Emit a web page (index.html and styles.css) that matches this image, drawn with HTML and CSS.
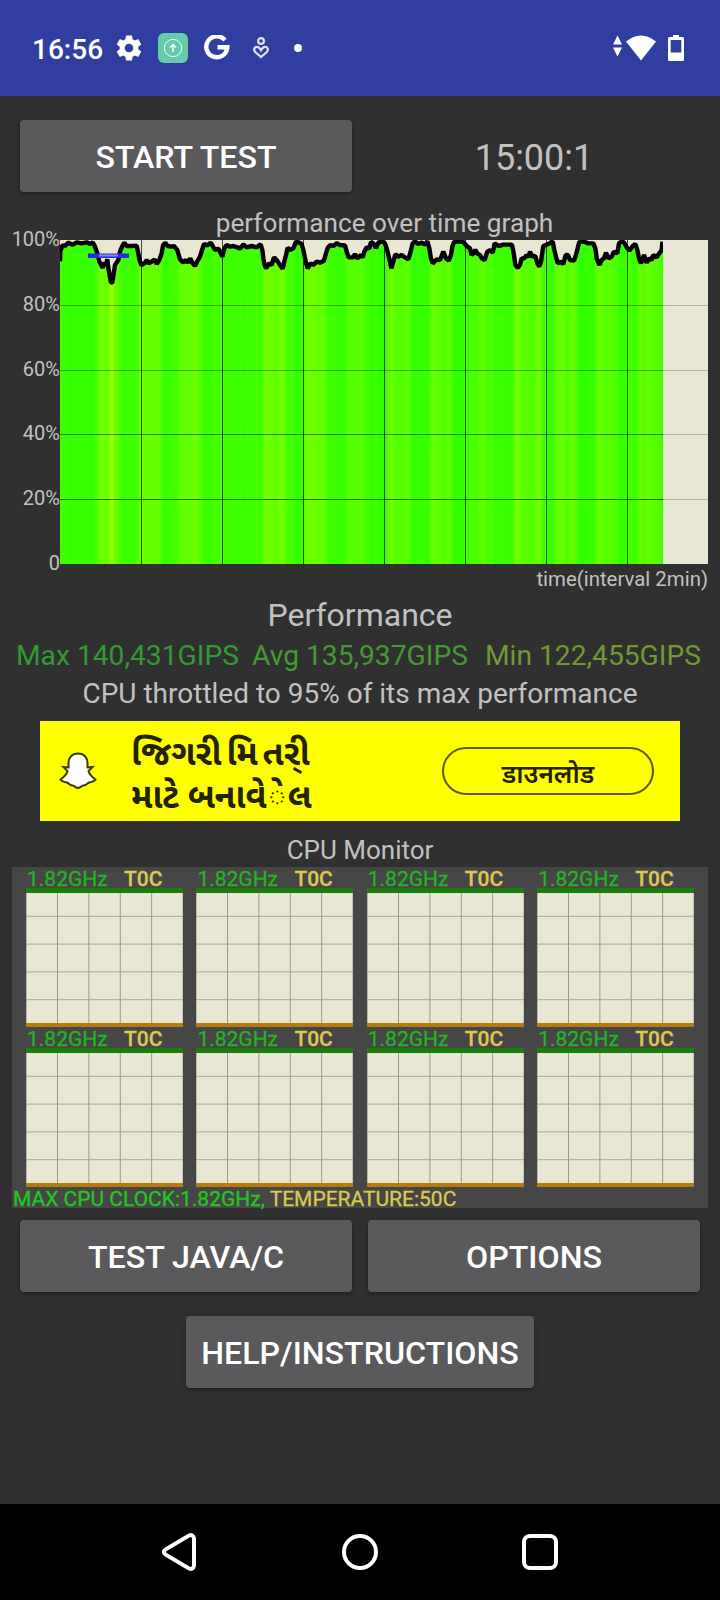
FILE: index.html
```html
<!DOCTYPE html>
<html lang="en">
<head>
    <meta charset="UTF-8">
    <title>CPU Throttling Test</title>
    <link rel="stylesheet" href="styles.css">
</head>
<body>
    <div class="status">
        <span class="clock">16:56</span>
        <svg class="gear" width="26" height="26" viewBox="2 2 20 20"><path fill="#fff" d="M19.14 12.94c.04-.3.06-.61.06-.94 0-.32-.02-.64-.07-.94l2.03-1.58c.18-.14.23-.41.12-.61l-1.92-3.32c-.12-.22-.37-.29-.59-.22l-2.39.96c-.5-.38-1.03-.7-1.62-.94l-.36-2.54c-.04-.24-.24-.41-.48-.41h-3.84c-.24 0-.43.17-.47.41l-.36 2.54c-.59.24-1.13.57-1.62.94l-2.39-.96c-.22-.08-.47 0-.59.22L2.74 8.87c-.12.21-.08.47.12.61l2.03 1.58c-.05.3-.09.63-.09.94s.02.64.07.94l-2.03 1.58c-.18.14-.23.41-.12.61l1.92 3.32c.12.22.37.29.59.22l2.39-.96c.5.38 1.03.7 1.62.94l.36 2.54c.05.24.24.41.48.41h3.84c.24 0 .44-.17.47-.41l.36-2.54c.59-.24 1.13-.56 1.62-.94l2.39.96c.22.08.47 0 .59-.22l1.92-3.32c.12-.22.07-.47-.12-.61l-2.01-1.58zM12 15.3c-1.8 0-3.3-1.5-3.3-3.3s1.5-3.3 3.3-3.3 3.3 1.5 3.3 3.3-1.5 3.3-3.3 3.3z"/></svg>
        <svg class="upload" width="30" height="30" viewBox="0 0 30 30"><rect width="30" height="30" rx="6" fill="#66cbaa"/><circle cx="15" cy="15" r="8.7" fill="none" stroke="#fff"/><path d="M15 19v-7M12 14.5l3-3 3 3" fill="none" stroke="#fff" stroke-width="1.5"/></svg>
        <svg class="google" width="26" height="26" viewBox="0 0 26 26"><path d="M21 5.2A10.5 10.5 0 1 0 23.3 12.3H13.5" fill="none" stroke="#fff" stroke-width="4.4"/></svg>
        <svg class="heart" width="16" height="22" viewBox="0 0 16 22"><circle cx="8" cy="4" r="2.9" fill="none" stroke="#dfe2f3" stroke-width="2.200"/><path d="M8 20L2.2 15C0 12.4 1.6 9.8 4 9.8c1.8 0 3 1.6 4 3.400 1-1.800 2.200-3.400 4-3.400 2.400 0 4 2.600 1.800 5.200z" fill="none" stroke="#dfe2f3" stroke-width="2.200"/></svg>
        <span class="dot"></span>
        <svg class="signal" width="44" height="26" viewBox="0 0 44 26"><path fill="#fff" d="M4.500 .5L9 9.500H0zM0 12.500h9l-4.500 9zM13 6.500Q28-5.500 43 6.500L28 25.500z"/></svg>
        <svg class="battery" width="16" height="26" viewBox="0 0 16 26"><path fill="#fff" fill-rule="evenodd" d="M5 0h6v2h3.500q1.500 0 1.500 1.500v21q0 1.500-1.500 1.500h-13Q0 26 0 24.500v-21Q0 2 1.500 2H5zM2.700 5v12.500h10.600V5z"/></svg>
    </div>

    <div class="main">
        <div class="row top">
            <button class="btn">START TEST</button>
            <div class="timer">15:00:1</div>
        </div>

        <div class="title"><span>performance over time graph</span></div>
        <div class="graph">
            <div class="scale">
                <span>100%</span>
                <span>80%</span>
                <span>60%</span>
                <span>40%</span>
                <span>20%</span>
                <span>0</span>
            </div>
            <canvas id="graph" width="648" height="324"></canvas>
        </div>
        <div class="interval">time(interval 2min)</div>

        <div class="heading">Performance</div>
        <div class="results">
            <span class="max">Max 140,431GIPS</span>
            <span class="avg">Avg 135,937GIPS</span>
            <span class="min">Min 122,455GIPS</span>
        </div>
        <div class="throttled">CPU throttled to 95% of its max performance</div>

        <div class="ad">
            <svg class="ghost" width="38" height="38" viewBox="0 0 38 38"><path d="M19 1.500c-6 0-9.500 4-9.500 9.500v4.500l-5-.5 4 4c-1 4-3.500 6-7 8.500 1 2 4 2.500 6.500 3 2 1 2.500 3 5.500 3 2 0 3 2.500 5.500 2.500s3.500-2.500 5.500-2.500c3 0 3.500-2 5.500-3 2.500-.5 5.500-1 6.500-3-3.500-2.500-6-4.500-7-8.500l4-4-5 .5V11c0-5.500-3.500-9.500-9.500-9.500z" fill="#fff" stroke="#3c3c00" stroke-width="2"/></svg>
            <div class="slogan" lang="gu">
                <div class="line">જિગરી મિ ત<span class="virama">રી</span></div>
                <div>માટે બનાવે<span class="mark">◌ે</span>લ</div>
            </div>
            <div class="download" lang="hi">डाउनलोड</div>
        </div>

        <div class="monitor-title">CPU Monitor</div>
        <div class="monitor">
            <div class="cores" id="cores">
                <div class="core"><div class="info"><span>1.82GHz</span><b>T0C</b></div><div class="plot"></div></div>
                <div class="core"><div class="info"><span>1.82GHz</span><b>T0C</b></div><div class="plot"></div></div>
                <div class="core"><div class="info"><span>1.82GHz</span><b>T0C</b></div><div class="plot"></div></div>
                <div class="core"><div class="info"><span>1.82GHz</span><b>T0C</b></div><div class="plot"></div></div>
                <div class="core"><div class="info"><span>1.82GHz</span><b>T0C</b></div><div class="plot"></div></div>
                <div class="core"><div class="info"><span>1.82GHz</span><b>T0C</b></div><div class="plot"></div></div>
                <div class="core"><div class="info"><span>1.82GHz</span><b>T0C</b></div><div class="plot"></div></div>
                <div class="core"><div class="info"><span>1.82GHz</span><b>T0C</b></div><div class="plot"></div></div>
            </div>
            <div class="summary"><span>MAX CPU CLOCK:1.82GHz,</span> <b>TEMPERATURE:50C</b></div>
        </div>

        <div class="row">
            <button class="btn">TEST JAVA/C</button>
            <button class="btn">OPTIONS</button>
        </div>
        <div class="row help">
            <button class="btn">HELP/INSTRUCTIONS</button>
        </div>
    </div>

    <div class="nav">
        <svg width="40" height="40" viewBox="2 0 40 40"><path d="M7.700 17.400Q4 20 7.700 22.600L31 36.500Q35 38 36 33.500V6.500Q35 2 31 3.500z"/></svg>
        <svg width="40" height="40" viewBox="0 0 40 40"><circle cx="20" cy="20" r="16"/></svg>
        <svg width="40" height="40" viewBox="0 0 40 40"><rect x="4" y="4" width="32" height="32" rx="6"/></svg>
    </div>

<script src="graph.js"></script>
</body>
</html>
```

FILE: graph.js
```js
// samples of the run, three per pixel; x/y is the origin of each part
var parts = [
    {x: -180, y: -420, data: [[180,484],[181,455],[187,436],[195,438],[205,428],[218,434],[230,427],[245,430],[260,427],[270,432],[278,427],[285,440],[292,460],[298,485],[308,503],[314,488],[318,495],[322,478],[326,510],[333,548],[337,548],[345,495],[355,480],[360,455],[366,440],[373,428],[380,438],[395,438],[410,437],[414,455],[418,478],[424,496],[435,488],[440,480],[446,490],[458,483],[464,478],[470,492],[478,480],[485,460],[489,436],[496,428],[503,438],[515,440],[522,438],[532,450],[540,478],[550,488],[557,480],[564,488],[571,475],[577,488],[585,498],[592,484],[600,470],[606,450],[612,432],[622,436],[632,428],[638,438],[645,450],[655,446],[661,457],[667,470],[673,445],[680,435],[690,440],[700,438],[712,442]]},
    {x: 540, y: -120, data: [[0,146],[10,133],[20,142],[35,138],[50,142],[62,133],[67,150],[70,175],[74,195],[78,205],[88,190],[95,195],[102,172],[110,180],[118,192],[128,206],[134,180],[138,165],[143,143],[150,150],[160,145],[168,125],[175,127],[185,132],[190,150],[194,170],[198,188],[203,205],[212,190],[220,195],[230,185],[240,188],[252,182],[258,160],[264,142],[272,135],[280,138],[290,130],[300,135],[315,136],[320,155],[326,172],[340,172],[345,162],[352,175],[362,165],[368,172],[373,155],[380,142],[388,145],[393,126],[400,130],[408,144],[415,128],[425,124],[434,128],[440,145],[445,165],[450,185],[454,205],[460,185],[466,163],[475,170],[485,165],[495,172],[505,178],[512,155],[518,130],[525,124],[535,132],[545,128],[555,134],[562,124],[568,145],[573,175],[578,190],[590,178],[600,180],[610,155],[618,175],[626,182],[633,165],[637,140],[642,126],[655,124],[670,126],[680,138],[690,145],[695,165],[700,160],[706,150],[712,160]]},
    {x: 1260, y: -120, data: [[0,165],[5,175],[14,180],[22,155],[30,150],[38,158],[44,130],[55,138],[70,134],[85,134],[96,134],[102,165],[106,195],[113,204],[120,195],[125,175],[132,175],[140,165],[145,172],[150,155],[158,170],[166,168],[172,190],[178,200],[183,185],[188,150],[190,138],[205,132],[218,124],[223,150],[228,170],[233,190],[242,185],[250,192],[257,165],[264,165],[270,180],[282,182],[288,165],[294,140],[298,126],[310,124],[325,130],[340,130],[346,145],[350,175],[358,195],[365,180],[372,175],[378,158],[385,175],[395,170],[402,155],[412,160],[417,130],[425,124],[433,128],[440,142],[448,152],[458,138],[466,132],[472,150],[477,175],[483,190],[492,165],[500,188],[507,175],[515,180],[520,165],[530,172],[538,160],[545,150],[547,125]]}
];

var points = [];
for (var i = 0; i < parts.length; i++) {
    for (var j = 0; j < parts[i].data.length; j++) {
        var p = parts[i].data[j];
        points.push([(p[0] + parts[i].x) / 3, (p[1] + parts[i].y) / 3]);
    }
}

var canvas = document.getElementById("graph");
var ctx = canvas.getContext("2d");
ctx.fillStyle = "#e7e7d3";
ctx.fillRect(0, 0, 648, 324);

// height of the line at a column
function valueAt(x) {
    for (var i = 1; i < points.length; i++) {
        if (points[i][0] >= x) {
            var a = points[i - 1], b = points[i];
            return a[1] + (b[1] - a[1]) * (x - a[0]) / (b[0] - a[0]);
        }
    }
    return points[points.length - 1][1];
}

// the lower the value, the more yellow the column
for (var x = 0; x < 603; x++) {
    var y = valueAt(x + 0.5);
    var red = Math.round(Math.min(165, 46 + y * 2.5));
    ctx.fillStyle = "rgb(" + red + ",255,0)";
    ctx.fillRect(x, y, 1, 324 - y);
}

// grid
for (var k = 1; k < 8; k++) {
    ctx.fillStyle = "rgba(0,0,0,0.7)";
    ctx.fillRect(k * 81, 0, 1, 324);
}
var alphas = [0.3, 0.3, 0.45, 0.6];
for (k = 1; k < 5; k++) {
    ctx.fillStyle = "rgba(0,0,0," + alphas[k - 1] + ")";
    ctx.fillRect(0, Math.round(k * 64.8), 603, 1);
    ctx.fillStyle = "rgba(0,0,0,0.22)";
    ctx.fillRect(603, Math.round(k * 64.8), 45, 1);
}

ctx.save();
ctx.beginPath();
ctx.rect(0, 0, 603, 324);
ctx.clip();
ctx.beginPath();
for (i = 0; i < points.length; i++) {
    ctx.lineTo(points[i][0], points[i][1]);
}
ctx.strokeStyle = "#000";
ctx.lineWidth = 4.4;
ctx.lineJoin = "bevel";
ctx.stroke();
ctx.restore();

// throttling marker
ctx.fillStyle = "#2a2ae6";
ctx.fillRect(28, 13.500, 41, 4.500);
ctx.fillStyle = "#8a8ad8";
ctx.fillRect(39, 14.500, 19, 2);
```

FILE: styles.css
```css
* {
    margin: 0;
    padding: 0;
    box-sizing: border-box;
}

body {
    width: 720px;
    height: 1600px;
    display: flex;
    flex-direction: column;
    background-color: #303030;
    color: #c1c1c1;
    font-family: Roboto, "Noto Sans", sans-serif;
    overflow: hidden;
}

svg, canvas {
    display: block;
    flex: none;
}

.status {
    height: 96px;
    padding: 0 36px 0 32px;
    display: flex;
    align-items: center;
    background-color: #303f9f;
    color: #fff;
}

.clock {
    width: 84px;
    font-size: 28px;
    font-weight: 500;
    line-height: 32px;
    padding-top: 4px;
}

.upload {
    margin-left: 16px;
}

.google {
    margin-left: 16px;
}

.heart {
    margin-left: 23px;
}

.dot {
    width: 8px;
    height: 8px;
    margin-left: 25px;
    border-radius: 50%;
    background-color: #fff;
}

.signal {
    margin-left: auto;
}

.battery {
    margin-left: 11px;
}

.main {
    flex: 1;
}

.row {
    display: flex;
    justify-content: center;
    gap: 16px;
    padding: 0 20px;
}

.btn {
    width: 332px;
    height: 72px;
    padding-top: 2px;
    border: none;
    border-radius: 4px;
    background-color: #5a595b;
    box-shadow: 0 2px 4px rgba(0, 0, 0, 0.35);
    color: #fff;
    font-family: inherit;
    font-size: 32.2px;
    font-weight: 500;
    white-space: nowrap;
}

.top {
    padding-top: 24px;
}

.timer {
    width: 332px;
    line-height: 76px;
    font-size: 36px;
    text-align: center;
}

.title {
    height: 44px;
    padding: 12px 0 0 49px;
    line-height: 30px;
    font-size: 26.2px;
    text-align: center;
}

.graph {
    display: flex;
}

.graph canvas {
    width: 648px;
    height: 324px;
}

.scale {
    width: 60px;
    height: 348px;
    margin: -13px 0 -11px;
    display: flex;
    flex-direction: column;
    justify-content: space-between;
    align-items: flex-end;
    font-size: 20px;
    line-height: 24px;
}

.interval {
    height: 30px;
    padding-right: 12px;
    line-height: 30px;
    font-size: 20.4px;
    text-align: right;
}

.heading {
    height: 42px;
    line-height: 42px;
    font-size: 32px;
    text-align: center;
}

.results {
    height: 38px;
    padding: 1px 19px 0 16px;
    display: flex;
    justify-content: space-between;
    line-height: 38px;
    font-size: 28.2px;
}

.max {
    color: #339933;
}

.avg {
    margin: 0 2px 0 -2px;
    color: #449933;
}

.min {
    color: #6f9933;
}

.throttled {
    height: 47px;
    padding-top: 1px;
    line-height: 38px;
    font-size: 28px;
    text-align: center;
}

.ad {
    width: 640px;
    height: 100px;
    margin: 0 auto;
    padding: 0 26px 0 19px;
    display: flex;
    align-items: center;
    background-color: #ffff00;
    color: #222200;
}

.slogan {
    margin-left: 34px;
    padding-top: 5px;
    font-family: "Noto Sans", "Noto Sans Gujarati", sans-serif;
    font-size: 34px;
    font-weight: 700;
    line-height: 43px;
    white-space: nowrap;
}

.line {
    word-spacing: -4px;
}

.virama {
    position: relative;
}

/* stroke under the letter */
.virama::after {
    content: "";
    position: absolute;
    left: 9px;
    bottom: 3px;
    width: 9px;
    height: 3px;
    background-color: #222200;
    transform: rotate(30deg);
}

.mark {
    margin: 0 2px;
}

.download {
    width: 212px;
    height: 48px;
    margin: 0 0 0 auto;
    border: 2px solid #5c5c00;
    border-radius: 24px;
    font-family: "Noto Sans", "Noto Sans Devanagari", sans-serif;
    font-size: 26px;
    font-weight: 600;
    line-height: 48px;
    text-align: center;
}

.monitor-title {
    height: 46px;
    padding-top: 14px;
    line-height: 30px;
    font-size: 26px;
    text-align: center;
}

.monitor {
    height: 341px;
    margin: 0 12px 12px;
    background-color: #464646;
    font-size: 21px;
    -webkit-text-stroke: 0.3px;
}

.cores {
    display: grid;
    grid-template-columns: repeat(4, 157px);
    column-gap: 13.400px;
    padding-left: 14px;
}

.info {
    height: 21px;
    padding-left: 1px;
    display: flex;
    line-height: 24px;
    color: #22b522;
}

.info span {
    width: 97px;
}

.monitor b {
    font-weight: 400;
    color: #dcc850;
}

.info b {
    font-weight: 500;
}

.plot {
    height: 139px;
    border-top: 5px solid #1a7d0e;
    border-bottom: 4px solid #b87a0a;
    background-color: #e7e7d3;
    background-image: linear-gradient(to left, #999990 1px, transparent 1px), linear-gradient(to top, #a5a59c 1px, transparent 1px);
    background-size: 31.400px 27.800px;
    background-position: 0.6px -4px;
}

.summary {
    height: 21px;
    padding-left: 1px;
    line-height: 24px;
    color: #22c822;
    white-space: nowrap;
}

.help {
    padding-top: 24px;
}

.help .btn {
    width: 348px;
}

.nav {
    height: 96px;
    padding: 0 160px;
    display: flex;
    justify-content: space-between;
    align-items: center;
    background-color: #000;
}

.nav svg {
    fill: none;
    stroke: #fff;
    stroke-width: 4;
}
```
